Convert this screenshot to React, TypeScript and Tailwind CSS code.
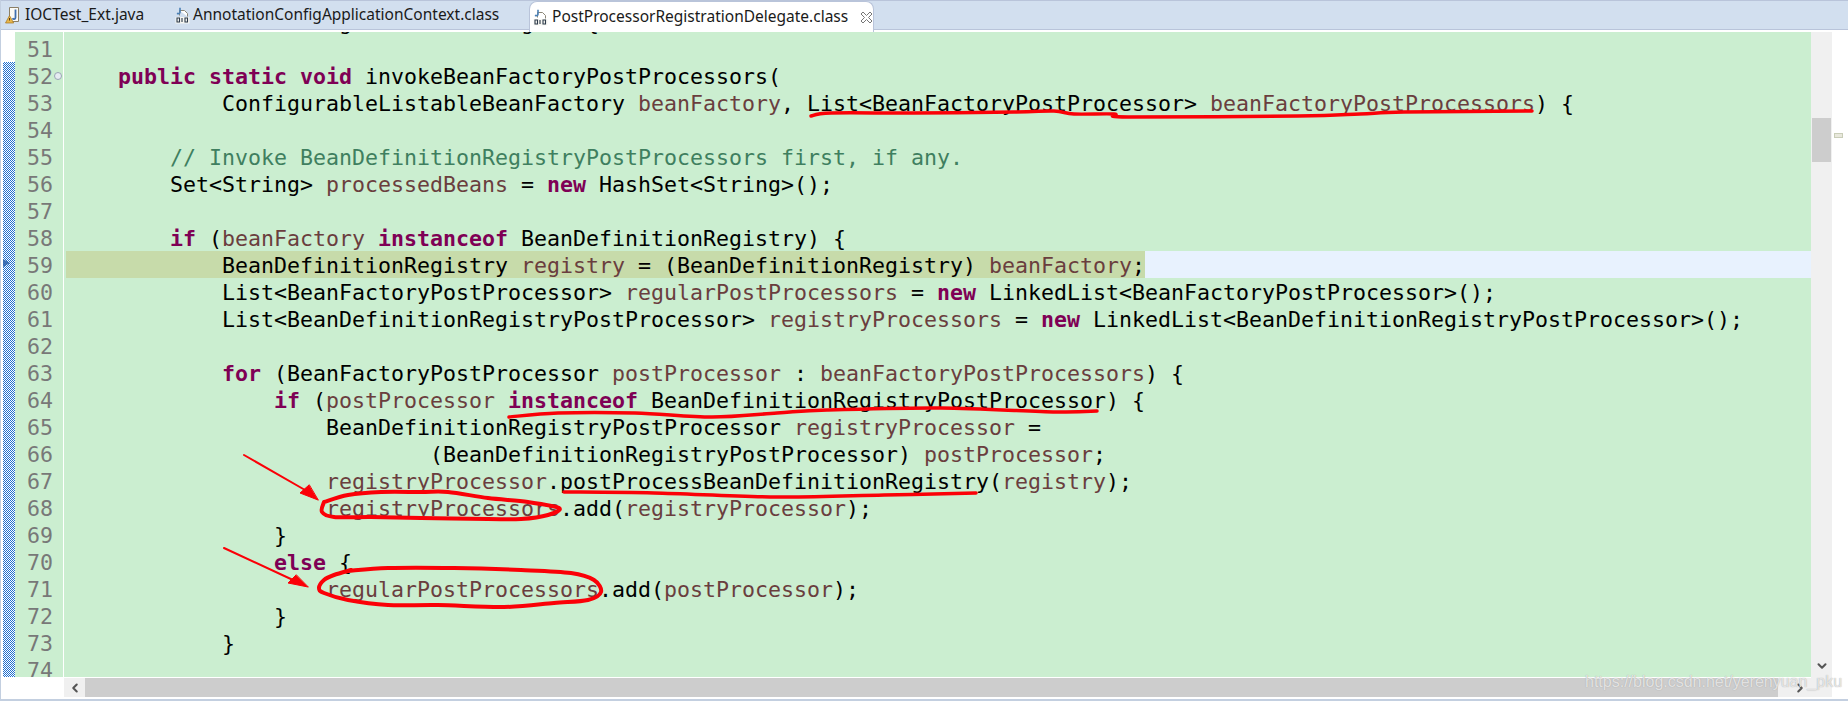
import { ChevronLeft, ChevronRight, ChevronDown } from "lucide-react";

type Seg = [string, "k" | "v" | "c" | "t"];

const k = (s: string): Seg => [s, "k"];
const v = (s: string): Seg => [s, "v"];
const c = (s: string): Seg => [s, "c"];
const t = (s: string): Seg => [s, "t"];

const lines: { n: number; segs: Seg[] }[] = [
  // only the descenders of this one show under the tabs
  { n: 50, segs: [k("class"), t(" PostProcessorRegistrationDelegate {")] },
  { n: 51, segs: [] },
  { n: 52, segs: [t("    "), k("public static void"), t(" invokeBeanFactoryPostProcessors(")] },
  { n: 53, segs: [t("            ConfigurableListableBeanFactory "), v("beanFactory"), t(", List<BeanFactoryPostProcessor> "), v("beanFactoryPostProcessors"), t(") {")] },
  { n: 54, segs: [] },
  { n: 55, segs: [t("        "), c("// Invoke BeanDefinitionRegistryPostProcessors first, if any.")] },
  { n: 56, segs: [t("        Set<String> "), v("processedBeans"), t(" = "), k("new"), t(" HashSet<String>();")] },
  { n: 57, segs: [] },
  { n: 58, segs: [t("        "), k("if"), t(" ("), v("beanFactory"), t(" "), k("instanceof"), t(" BeanDefinitionRegistry) {")] },
  { n: 59, segs: [t("            BeanDefinitionRegistry "), v("registry"), t(" = (BeanDefinitionRegistry) "), v("beanFactory"), t(";")] },
  { n: 60, segs: [t("            List<BeanFactoryPostProcessor> "), v("regularPostProcessors"), t(" = "), k("new"), t(" LinkedList<BeanFactoryPostProcessor>();")] },
  { n: 61, segs: [t("            List<BeanDefinitionRegistryPostProcessor> "), v("registryProcessors"), t(" = "), k("new"), t(" LinkedList<BeanDefinitionRegistryPostProcessor>();")] },
  { n: 62, segs: [] },
  { n: 63, segs: [t("            "), k("for"), t(" (BeanFactoryPostProcessor "), v("postProcessor"), t(" : "), v("beanFactoryPostProcessors"), t(") {")] },
  { n: 64, segs: [t("                "), k("if"), t(" ("), v("postProcessor"), t(" "), k("instanceof"), t(" BeanDefinitionRegistryPostProcessor) {")] },
  { n: 65, segs: [t("                    BeanDefinitionRegistryPostProcessor "), v("registryProcessor"), t(" =")] },
  { n: 66, segs: [t("                            (BeanDefinitionRegistryPostProcessor) "), v("postProcessor"), t(";")] },
  { n: 67, segs: [t("                    "), v("registryProcessor"), t(".postProcessBeanDefinitionRegistry("), v("registry"), t(");")] },
  { n: 68, segs: [t("                    "), v("registryProcessors"), t(".add("), v("registryProcessor"), t(");")] },
  { n: 69, segs: [t("                }")] },
  { n: 70, segs: [t("                "), k("else"), t(" {")] },
  { n: 71, segs: [t("                    "), v("regularPostProcessors"), t(".add("), v("postProcessor"), t(");")] },
  { n: 72, segs: [t("                }")] },
  { n: 73, segs: [t("            }")] },
  { n: 74, segs: [] },
];

const segClass = {
  k: "font-bold text-[#7f0055]",
  v: "text-[#6a3e3e]",
  c: "text-[#3f7f5f]",
  t: "text-black",
};

function ClassIcon() {
  return (
    <svg width="15" height="17" viewBox="0 0 15 17" className="shrink-0">
      <path d="M4.5 3.5h5l3 3v3M4.5 3.5v5" fill="#fff" stroke="#8b8778" />
      <path d="M5 0.8v4.4c0 1.4-1.6 1.8-3 1" fill="none" stroke="#4a7fb5" strokeWidth="1.6" />
      <path d="M0.5 10h14v6.5h-14z" fill="#f7f7f2" />
      <path d="M2 11v4h2.5v-4zM7 11v4M10 11v4h2.5v-4z" fill="none" stroke="#2d3a4a" strokeWidth="1.1" />
    </svg>
  );
}

function JavaIcon() {
  return (
    <svg width="15" height="18" viewBox="0 0 15 18" className="shrink-0">
      <path d="M4.5 1.5h9v14h-9z" fill="#fbfaf5" stroke="#8b7f66" />
      <path d="M10.5 3.5v8c0 2-2.2 2-3 0.8" fill="none" stroke="#3f6fb0" strokeWidth="1.8" />
      <path d="M4.5 9.5l4.2 7.5h-8.2z" fill="#e8b64a" stroke="#a3741c" strokeWidth="0.7" />
      <path d="M4.5 12v2.5" stroke="#5a3a10" strokeWidth="1" />
    </svg>
  );
}

function CloseIcon() {
  return (
    <svg width="13" height="13" viewBox="0 0 13 13" className="ml-[8px] shrink-0">
      <path d="M1 3l2-2 3.5 3.5L10 1l2 2-3.5 3.5L12 10l-2 2-3.5-3.5L3 12l-2-2 3.5-3.5z" fill="#fff" stroke="#777" />
    </svg>
  );
}

// hand drawn look: run a curve through the points
function smooth(p: number[][]) {
  let d = `M${p[0][0]} ${p[0][1]}`;
  for (let i = 0; i < p.length - 1; i++) {
    const a = p[Math.max(i - 1, 0)];
    const b = p[i];
    const e = p[i + 1];
    const f = p[Math.min(i + 2, p.length - 1)];
    d += ` C${b[0] + (e[0] - a[0]) / 6} ${b[1] + (e[1] - a[1]) / 6} ${e[0] - (f[0] - b[0]) / 6} ${e[1] - (f[1] - b[1]) / 6} ${e[0]} ${e[1]}`;
  }
  return d;
}

const underline53 = [[810, 116], [830, 113], [913, 113], [1013, 112], [1053, 111], [1073, 114], [1113, 114], [1127, 117], [1297, 116], [1359, 114], [1403, 112], [1531, 111]];
const underline64 = [[508, 417], [557, 413], [634, 413], [711, 417], [776, 413], [826, 410], [940, 408], [1055, 412], [1096, 411]];
const underline67 = [[563, 492], [653, 493], [776, 497], [883, 495], [975, 493]];
const ring68 = [[323, 502], [347, 495], [380, 492], [420, 492], [447, 492], [487, 498], [527, 502], [558, 508], [547, 515], [520, 519], [487, 519], [420, 518], [370, 517], [333, 517], [321, 512], [323, 502]];
const ring71 = [[347, 571], [387, 568], [453, 568], [520, 570], [570, 573], [593, 580], [600, 592], [587, 600], [553, 603], [503, 607], [437, 605], [387, 605], [347, 600], [323, 593], [318, 588], [323, 580], [333, 575], [350, 570]];

// red marker pen on top of the editor
function Annotations() {
  return (
    <svg width="1848" height="701" viewBox="0 0 1848 701" className="absolute left-0 top-0 pointer-events-none" fill="none" stroke="#fb0007" strokeLinecap="round" strokeLinejoin="round">
      <path d={smooth(underline53)} strokeWidth="3.5" />
      <path d={smooth(underline64)} strokeWidth="3.5" />
      <path d={smooth(underline67)} strokeWidth="3.5" />
      <path d={smooth(ring68)} strokeWidth="4" />
      <path d={smooth(ring71)} strokeWidth="4" />
      <path d="M243 455 L304 490" strokeWidth="2" />
      <path d="M223 548 L292 580" strokeWidth="2" />
      <path d="M317 500 L299 493 L308 485 Z" fill="#fb0007" stroke="#fb0007" />
      <path d="M307 587 L287 583 L295 575 Z" fill="#fb0007" stroke="#fb0007" />
    </svg>
  );
}

export default function App() {
  return (
    <div className="relative flex h-[701px] w-[1848px] flex-col overflow-hidden border-l border-[#c3cfe0] bg-white font-['DejaVu_Sans_Mono',monospace]">
      {/* Tab strip */}
      <div className="z-10 flex h-[30px] shrink-0 items-center border-y border-[#b9c4da] bg-[#d2dfef] font-['Noto_Sans',sans-serif] text-[15.5px] text-[#1a1a1a]">
        <div className="flex w-[174px] items-center gap-[5px] pl-[4px]">
          <JavaIcon />
          <span>IOCTest_Ext.java</span>
        </div>
        <div className="flex w-[354px] items-center gap-[3px]">
          <ClassIcon />
          <span className="whitespace-nowrap">AnnotationConfigApplicationContext.class</span>
        </div>
        <div className="-mb-[3px] flex h-[31px] w-[345px] items-center gap-[4px] rounded-t-[8px] border border-b-0 border-[#b9c4da] bg-white pl-[3px]">
          <ClassIcon />
          <span className="whitespace-nowrap">PostProcessorRegistrationDelegate.class</span>
          <CloseIcon />
        </div>
      </div>

      {/* Editor */}
      <div className="flex pl-[2px] pt-[2px]">
        <div className="flex h-[645px] w-[12px] shrink-0 flex-col">
          <div className="h-[30px] bg-white" />
          <div className="relative flex-1 bg-[repeating-conic-gradient(#1f6fd0_0_25%,#ffffff_0_50%)] bg-[length:2px_2px]">
            <span className="absolute left-0 top-[197px] h-0 w-0 border-y-[4px] border-l-[7px] border-y-transparent border-l-[#3c6eb4]" />
          </div>
        </div>

        <div className="flex h-[645px] w-[1796px] flex-col overflow-hidden bg-[#cbeed0] text-[21.6px] leading-[27px]">
          {lines.map((l) => (
            <div key={l.n} className={`flex h-[27px] shrink-0 whitespace-pre ${l.n === 50 ? "-mt-[24px]" : ""} ${l.n === 59 ? "bg-[#e8f2fe]" : ""}`}>
              <div className="flex h-[27px] w-[48px] shrink-0 justify-end bg-[#cbeed0] pr-[10px] pt-[1px] text-[#787878]">
                <span className="relative">
                  {l.n}
                  {l.n === 52 && <span className="absolute -right-[9px] top-[9px] h-[8px] w-[8px] rounded-full border border-[#9aa5b5] bg-[#e6ecf2]" />}
                </span>
              </div>
              <div className="w-[1px] shrink-0 bg-white" />
              <div className="w-[2px] shrink-0 bg-[#cbeed0]" />
              <div className={`h-[27px] pt-[1px] ${l.n === 59 ? "bg-[#c7dbaa]" : ""}`}>
                {l.segs.map((s, i) => (
                  <span key={i} className={segClass[s[1]]}>
                    {s[0]}
                  </span>
                ))}
              </div>
            </div>
          ))}
        </div>
      </div>

      {/* Vertical scrollbar and overview ruler */}
      <div className="absolute left-[1810px] top-[32px] flex h-[665px] w-[37px]">
        <div className="relative h-full w-[21px] bg-[#f0f0f0]">
          <div className="absolute left-[1px] top-[86px] h-[44px] w-[19px] bg-[#cdcdcd]" />
          <ChevronDown size={14} strokeWidth={3.5} className="absolute left-[4px] top-[627px] text-[#555]" />
        </div>
        <div className="relative h-full w-[16px] bg-white">
          <div className="absolute left-[2px] top-[101px] h-[5px] w-[9px] border border-[#c9cdb8] bg-[#e8e8dc]" />
        </div>
      </div>

      {/* Horizontal scrollbar */}
      <div className="absolute left-[63px] top-[678px] flex h-[19px] w-[1747px]">
        <div className="flex w-[21px] items-center justify-center bg-[#f0f0f0]">
          <ChevronLeft size={14} strokeWidth={3.5} className="text-[#555]" />
        </div>
        <div className="flex-1 bg-[#cdcdcd]" />
        <div className="flex w-[33px] items-center justify-end bg-[#f0f0f0] pr-[4px]">
          <ChevronRight size={14} strokeWidth={3.5} className="text-[#555]" />
        </div>
      </div>
      <div className="absolute bottom-0 left-0 h-[2px] w-full bg-[#c3cfe0]" />

      <Annotations />

      <span className="absolute left-[1584px] top-[674px] whitespace-nowrap font-['Liberation_Sans',sans-serif] text-[16px] leading-[16px] text-white/70 [text-shadow:0_0_1px_#999]">
        https://blog.csdn.net/yerenyuan_pku
      </span>
    </div>
  );
}
